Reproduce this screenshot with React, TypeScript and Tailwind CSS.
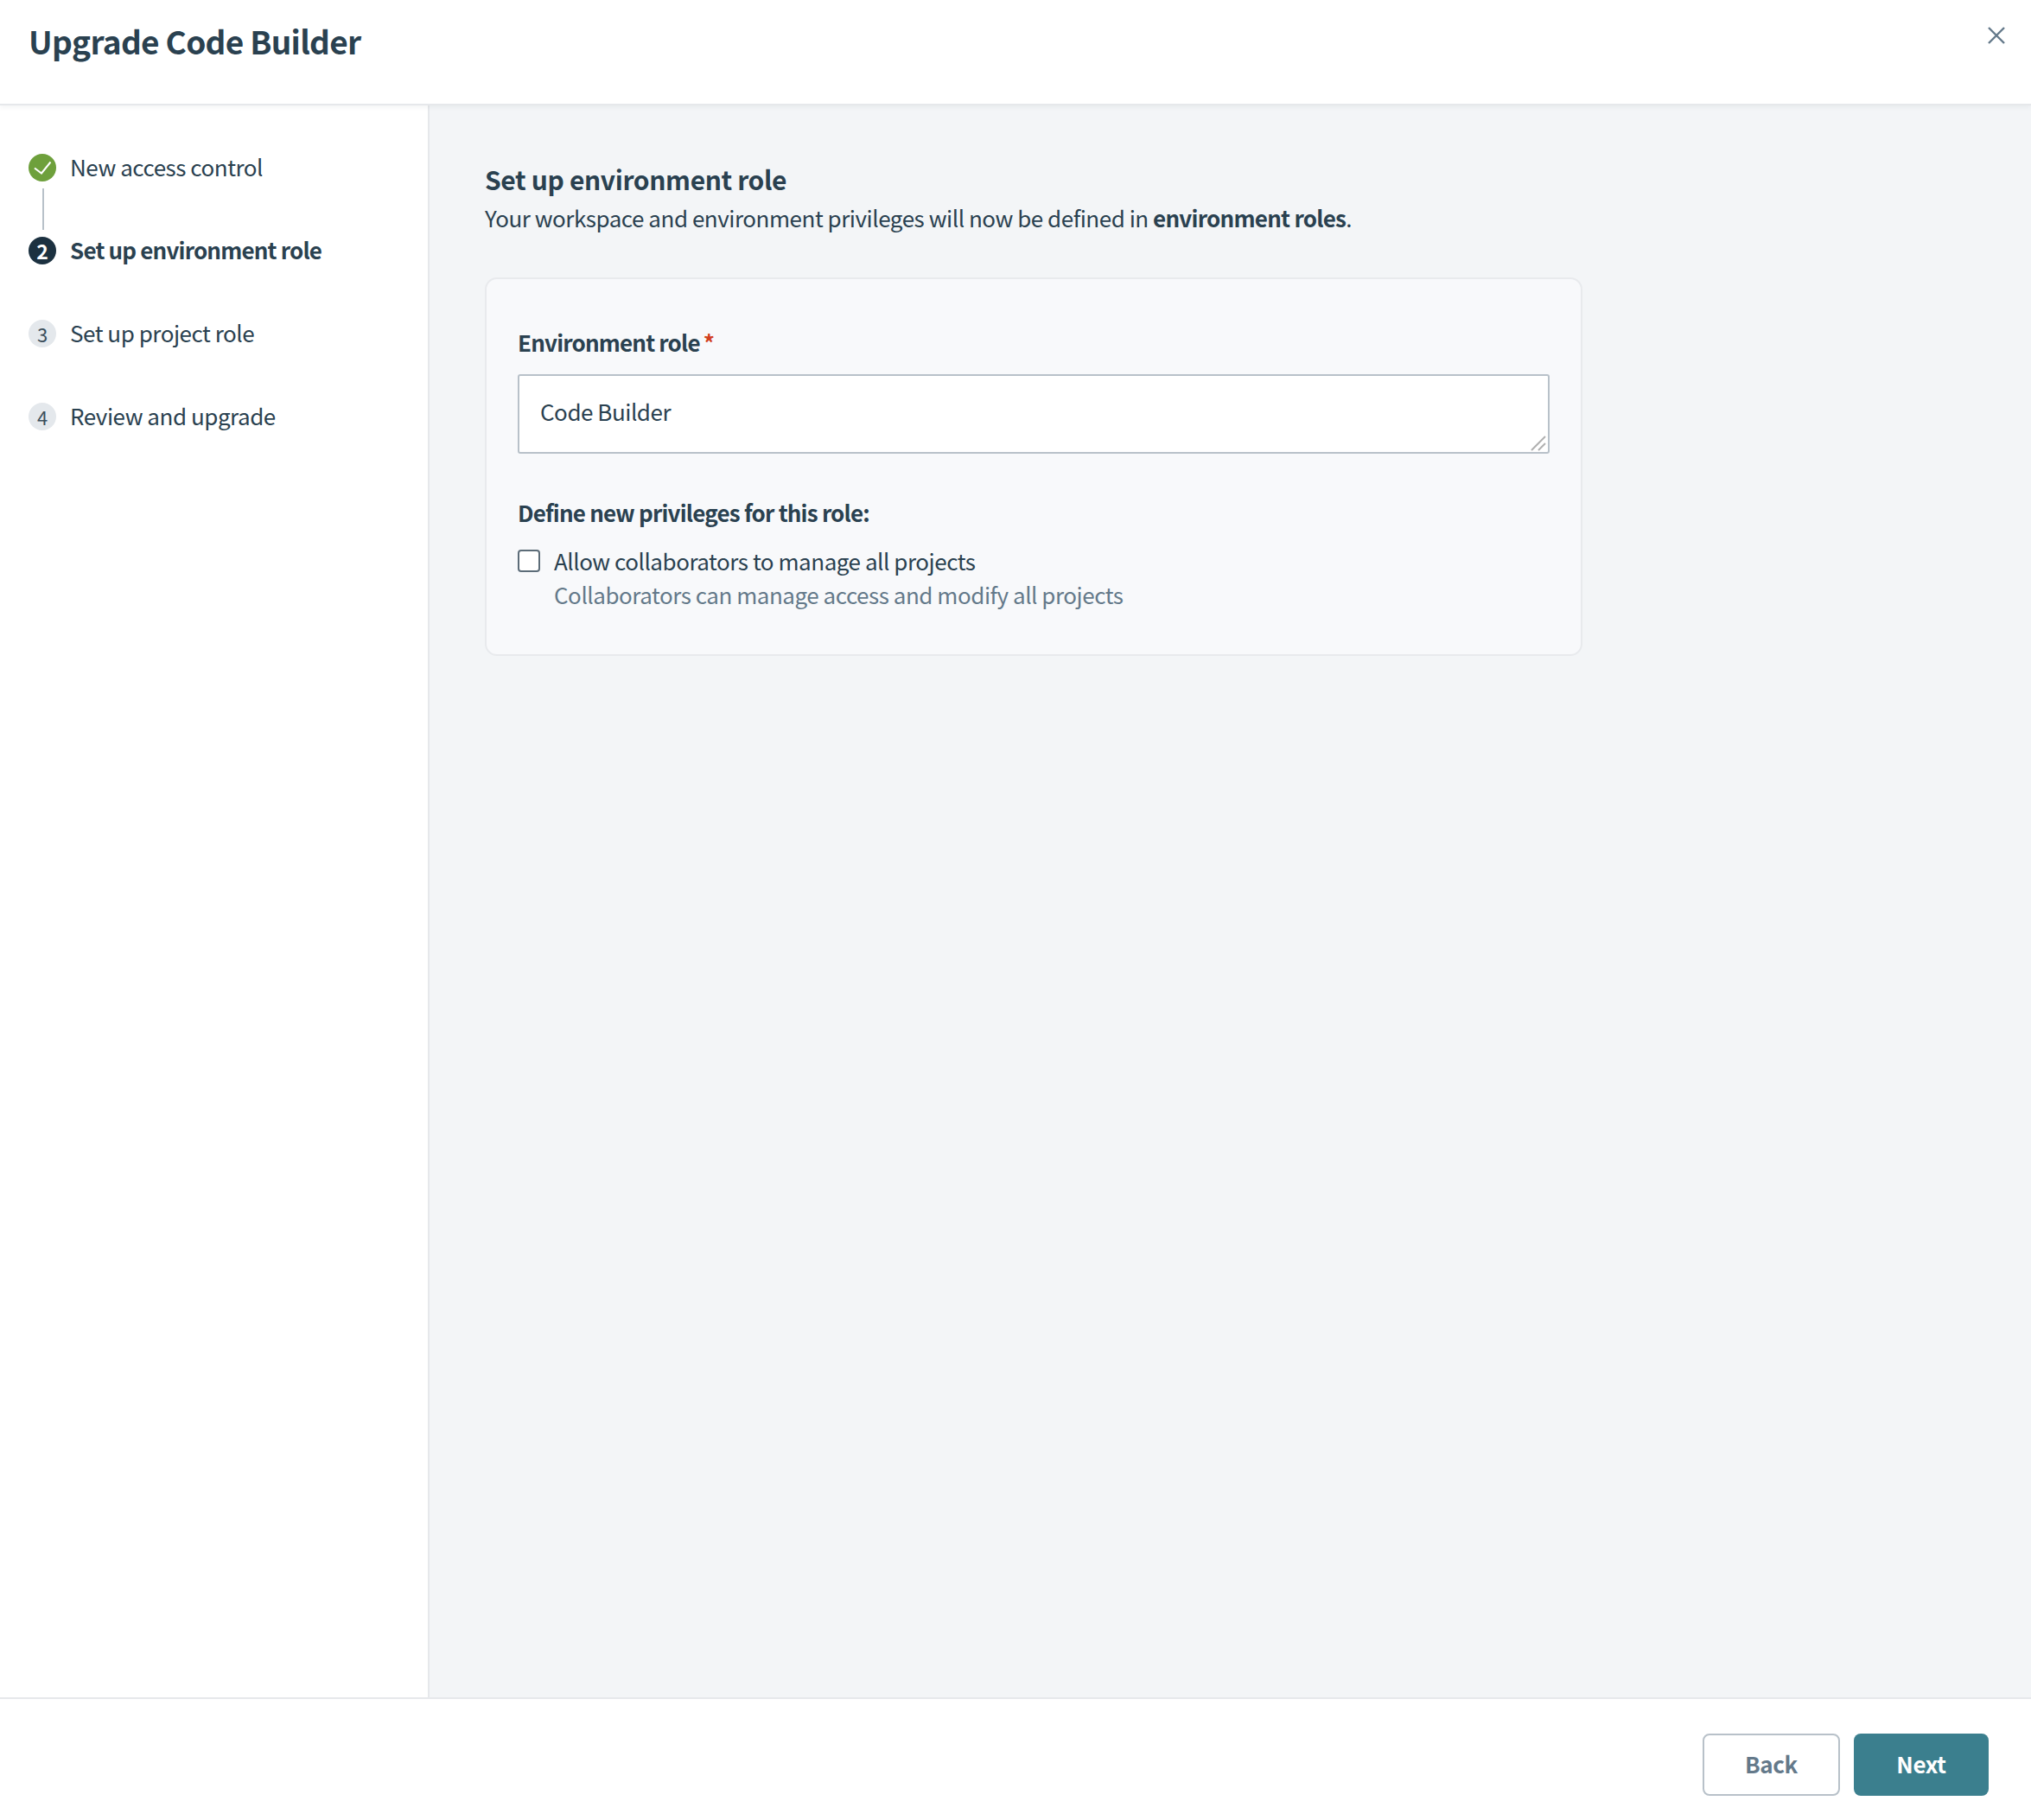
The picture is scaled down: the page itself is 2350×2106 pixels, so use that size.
const font = "[font-family:'Noto_Sans_CJK_SC','Source_Sans_Pro','Noto_Sans',sans-serif]";

function Step({ n, label, state, last }: { n: number; label: string; state: "done" | "active" | "todo"; last?: boolean }) {
  return (
    <div className="flex flex-col">
      <div className="flex h-8 items-center gap-[16px]">
        {state === "done" ? (
          <span className="flex size-8 items-center justify-center rounded-full bg-[#6ea03c]">
            <svg width="32" height="32" viewBox="0 0 32 32" fill="none">
              <path d="M7 16.5 L15 22.5 L25.5 9.5" stroke="#fff" strokeWidth="2" />
            </svg>
          </span>
        ) : state === "active" ? (
          <span className="flex size-8 items-center justify-center rounded-full bg-[#1c3140] text-[23px] font-bold leading-none text-white">{n}</span>
        ) : (
          <span className="flex size-8 items-center justify-center rounded-full bg-[#e4e8ec] text-[22px] leading-none text-[#3b4f5c]">{n}</span>
        )}
        <span className={`pb-[2px] text-[26px] leading-8 text-[#2a4150] ${state === "active" ? "font-semibold tracking-[-0.82px]" : "font-normal tracking-[-0.47px]"}`}>{label}</span>
      </div>
      {!last && (
        <div className="flex h-16 items-center pl-[16px]">
          {state === "done" && <div className="h-12 w-[2px] bg-[#b8c1c9]" />}
        </div>
      )}
    </div>
  );
}

export default function App() {
  return (
    <div className={`flex h-[2106px] w-[2350px] flex-col bg-white text-[#2a4150] ${font}`}>
      <header className="relative z-10 flex h-[122px] shrink-0 items-start justify-between border-b-2 border-[#e6e8eb] bg-white pl-[33px] pr-[30px] shadow-[0_2px_6px_rgba(30,50,70,0.06)]">
        <h1 className="mt-[22px] text-[37px] font-bold leading-[50px] tracking-[-0.7px] text-[#2a4150]">Upgrade Code Builder</h1>
        <svg className="mt-[31px]" width="20" height="20" viewBox="0 0 20 20" fill="none">
          <path d="M1 1 L19 19 M19 1 L1 19" stroke="#64798a" strokeWidth="2.4" />
        </svg>
      </header>
      <div className="flex min-h-0 flex-1">
        <aside className="w-[497px] shrink-0 border-r-2 border-[#e6e8eb] bg-white pl-[33px] pt-[56px]">
          <Step n={1} label="New access control" state="done" />
          <Step n={2} label="Set up environment role" state="active" />
          <Step n={3} label="Set up project role" state="todo" />
          <Step n={4} label="Review and upgrade" state="todo" last />
        </aside>
        <main className="flex-1 bg-[#f3f5f7] pl-[64px] pt-[65px]">
          <h2 className="text-[30px] font-bold leading-10 tracking-[-0.37px] text-[#2a4150]">Set up environment role</h2>
          <p className="mt-[6px] text-[26px] leading-[38px] tracking-[-0.47px] text-[#2a4150]">
            Your workspace and environment privileges will now be defined in <strong className="font-semibold tracking-[-0.75px]">environment roles</strong>.
          </p>
          <section className="mt-[50px] h-[438px] w-[1270px] rounded-[14px] border-2 border-[#e8eaed] bg-[#f8f9fb] px-[36px] pt-[57px]">
            <label className="flex h-8 items-center text-[26px] font-semibold leading-8 tracking-[-0.82px] text-[#2a4150]">
              Environment role<span className="ml-[4px] text-[#d2401e]">*</span>
            </label>
            <div className="relative mt-[21px] h-[92px] w-[1194px]">
              <div className="flex h-full items-center rounded-[3px] border-2 border-[#b8c1c9] bg-white pb-[8px] pl-[24px] text-[26px] tracking-[-0.47px] text-[#2a4150]">Code Builder</div>
              <svg className="absolute bottom-[3px] right-[4px]" width="18" height="18" viewBox="0 0 18 18" fill="none">
                <path d="M1 17 L17 1 M9 17 L17 9" stroke="#b0b0b0" strokeWidth="2" />
              </svg>
            </div>
            <p className="mt-[52px] text-[26px] font-semibold leading-8 tracking-[-0.8px] text-[#2a4150]">Define new privileges for this role:</p>
            <div className="mt-[24px] flex items-start gap-[16px]">
              <span className="mt-[3px] size-[26px] shrink-0 rounded-[4px] border-2 border-[#5c6c78] bg-white" />
              <div className="flex flex-col">
                <span className="text-[26px] leading-8 tracking-[-0.47px] text-[#2a4150]">Allow collaborators to manage all projects</span>
                <span className="mt-[7px] text-[26px] leading-8 tracking-[-0.47px] text-[#64798a]">Collaborators can manage access and modify all projects</span>
              </div>
            </div>
          </section>
        </main>
      </div>
      <footer className="flex h-[142px] shrink-0 items-start justify-end gap-[16px] border-t-2 border-[#e6e8eb] bg-white pr-[49px] pt-[40px]">
        <button className="h-[72px] w-[159px] rounded-[8px] border-2 border-[#b8c1c9] bg-white pb-[3px] text-[26px] font-semibold tracking-[-0.4px] text-[#64798a]">Back</button>
        <button className="h-[72px] w-[156px] rounded-[8px] bg-[#3b7f8e] pb-[3px] text-[26px] font-semibold tracking-[-0.4px] text-white">Next</button>
      </footer>
    </div>
  );
}
